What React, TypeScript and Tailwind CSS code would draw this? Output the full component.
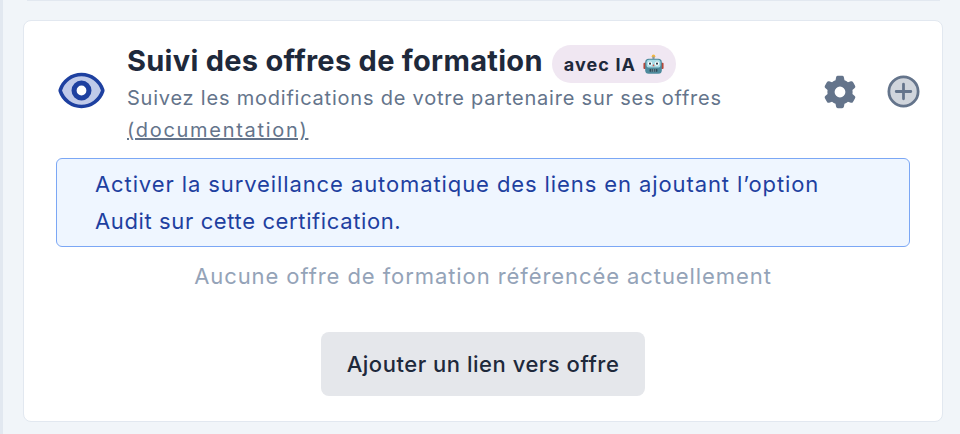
const font = "font-['Inter',sans-serif]";

function Eye() {
  return (
    <svg viewBox="0 0 24 24" className="w-[51px] h-[51px] shrink-0" fill="none">
      <path d="M2.04 12.32a1 1 0 0 1 0-.64C3.42 7.51 7.36 4.5 12 4.5s8.57 3 9.96 7.18a1 1 0 0 1 0 .64C20.58 16.49 16.64 19.5 12 19.5s-8.57-3-9.96-7.18Z" fill="#1e40af" fillOpacity="0.28" stroke="#1e40a0" strokeWidth="1.7" strokeLinecap="round" strokeLinejoin="round" />
      <circle cx="12" cy="12" r="3.5" fill="#fff" stroke="#1e40a0" strokeWidth="2.4" />
    </svg>
  );
}

function Gear() {
  return (
    <svg viewBox="0 0 20 20" className="w-[36px] h-[36px]" fill="#64748b">
      <path fillRule="evenodd" clipRule="evenodd" d="M7.84 1.804A1 1 0 0 1 8.82 1h2.36a1 1 0 0 1 .98.804l.331 1.652a6.993 6.993 0 0 1 1.929 1.115l1.598-.54a1 1 0 0 1 1.186.447l1.18 2.044a1 1 0 0 1-.205 1.251l-1.267 1.113a7.047 7.047 0 0 1 0 2.228l1.267 1.113a1 1 0 0 1 .206 1.25l-1.18 2.045a1 1 0 0 1-1.187.447l-1.598-.54a6.993 6.993 0 0 1-1.929 1.115l-.33 1.652a1 1 0 0 1-.98.804H8.82a1 1 0 0 1-.98-.804l-.331-1.652a6.993 6.993 0 0 1-1.929-1.115l-1.598.54a1 1 0 0 1-1.186-.447l-1.18-2.044a1 1 0 0 1 .205-1.251l1.267-1.114a7.05 7.05 0 0 1 0-2.227L1.821 7.773a1 1 0 0 1-.206-1.25l1.18-2.045a1 1 0 0 1 1.187-.447l1.598.54A6.992 6.992 0 0 1 7.51 3.456l.33-1.652ZM10 13a3 3 0 1 0 0-6 3 3 0 0 0 0 6Z" />
    </svg>
  );
}

function Plus() {
  return (
    <svg viewBox="0 0 24 24" className="w-[39px] h-[39px]" fill="none">
      <circle cx="12" cy="12" r="9" fill="#64748b" fillOpacity="0.3" stroke="#64748b" strokeWidth="1.7" />
      <path d="M12 7.5v9M7.5 12h9" stroke="#64748b" strokeWidth="1.7" strokeLinecap="round" />
    </svg>
  );
}

function Robot() {
  return (
    <svg viewBox="0 0 24 24" className="w-[21px] h-[21px] inline-block">
      <circle cx="12" cy="2.6" r="2" fill="#f4b63f" />
      <rect x="10.8" y="3" width="2.4" height="3" fill="#8a9aa3" />
      <rect x="0.5" y="10" width="3" height="7" rx="1" fill="#b5483a" />
      <rect x="20.5" y="10" width="3" height="7" rx="1" fill="#b5483a" />
      <rect x="2.5" y="5.5" width="19" height="17" rx="4" fill="#4d8a9c" />
      <rect x="4" y="6.5" width="16" height="9" rx="3" fill="#a9dbe6" />
      <circle cx="8" cy="11" r="2.4" fill="#fff" />
      <circle cx="16" cy="11" r="2.4" fill="#fff" />
      <circle cx="8" cy="11" r="1.2" fill="#2d3e4a" />
      <circle cx="16" cy="11" r="1.2" fill="#2d3e4a" />
      <path d="M12 11.5l1.3 2.5h-2.6z" fill="#d9564a" />
      <rect x="7.5" y="17" width="9" height="3.4" rx="1" fill="#2d4a58" />
      <path d="M10 17v3.4M12 17v3.4M14 17v3.4" stroke="#a9c6cf" strokeWidth="0.6" />
    </svg>
  );
}

export default function App() {
  return (
    <div className={`w-[960px] h-[434px] overflow-hidden bg-[#f1f5f9] border-l-[3px] border-[#e2e8f0] ${font}`}>
      <div className="ml-[24px] mr-[20px] h-px bg-[#e2e8f0]" />
      <div className="ml-[20px] mt-[19px] w-[920px] h-[402px] bg-white border border-[#e2e8f0] rounded-lg">
        <div className="flex items-start pl-[32px] pr-[19px] pt-[22px]">
          <div className="mt-[22px] mr-[20px]"><Eye /></div>
          <div className="flex-1">
            <div className="flex items-start h-[39px]">
              <h2 className="text-[29px] leading-[35px] font-bold text-[#1e293b] tracking-[0.28px]">Suivi des offres de formation</h2>
              <span className="ml-[9px] mt-[2px] flex items-center gap-[7px] h-[38px] pl-[12px] pr-[12px] rounded-full bg-[#f0e7f2] text-[18px] font-bold text-[#1e293b] tracking-[1.1px]">avec IA <Robot /></span>
            </div>
            <p className="w-[620px] text-[20px] leading-[32px] text-[#64748b] tracking-[0.78px]">Suivez les modifications de votre partenaire sur ses offres <a className="underline tracking-[1.7px]">(documentation)</a></p>
          </div>
          <div className="flex items-center gap-[26px] mt-[29px]">
            <Gear />
            <Plus />
          </div>
        </div>
        <div className="ml-[32px] w-[854px] h-[89px] mt-[12px] rounded-md border border-[#7ba7f5] bg-[#eff6ff] pl-[38px] pt-[7px] text-[22px] leading-[37px] text-[#1e40a0]">
          <p className="tracking-[0.9px]">Activer la surveillance automatique des liens en ajoutant l’option</p>
          <p className="tracking-[0.62px]">Audit sur cette certification.</p>
        </div>
        <p className="mt-[11px] text-center text-[22px] leading-[36px] text-[#94a3b8] tracking-[0.92px]">Aucune offre de formation référencée actuellement</p>
        <div className="flex justify-center mt-[38px]">
          <button className="w-[324px] h-[64px] rounded-lg bg-[#e5e7eb] text-[22px] font-medium text-[#1e293b] tracking-[0.52px]">Ajouter un lien vers offre</button>
        </div>
      </div>
    </div>
  );
}
